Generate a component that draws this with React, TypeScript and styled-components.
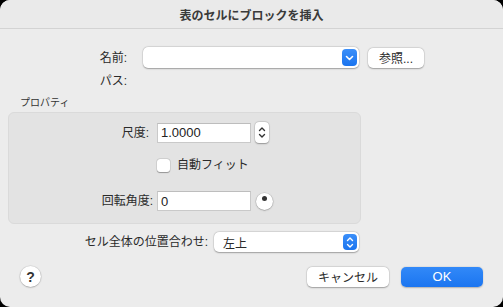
import styled, { createGlobalStyle } from "styled-components";

const GlobalStyle = createGlobalStyle`
  html, body {
    margin: 0;
    padding: 0;
    background: #000;
  }
  body {
    font-family: "Liberation Sans", "Noto Sans CJK JP", sans-serif;
    color: #262626;
  }
`;

function ChevronDown() {
  return (
    <svg width="9" height="6" viewBox="0 0 9 6">
      <path d="M1.5 1.5 L4.5 4.5 L7.5 1.5" fill="none" stroke="#fff" strokeWidth="1.6" strokeLinecap="round" strokeLinejoin="round" />
    </svg>
  );
}

function UpDown({ color }: { color: string }) {
  return (
    <svg width="8" height="13" viewBox="0 0 8 13">
      <path d="M1.5 4.5 L4 2 L6.5 4.5" fill="none" stroke={color} strokeWidth="1.4" strokeLinecap="round" strokeLinejoin="round" />
      <path d="M1.5 8.5 L4 11 L6.5 8.5" fill="none" stroke={color} strokeWidth="1.4" strokeLinecap="round" strokeLinejoin="round" />
    </svg>
  );
}

function App() {
  return (
    <>
      <GlobalStyle />
      <Window>
        <TitleBar>表のセルにブロックを挿入</TitleBar>
        <Body>
          <Row $top={18}>
            <Label $width={143} $pad={16}>名前:</Label>
            <Combo>
              <ComboArrow>
                <ChevronDown />
              </ComboArrow>
            </Combo>
            <PushButton $width={56} $left={9}>参照...</PushButton>
          </Row>
          <Row $top={5}>
            <Label $width={143} $pad={16}>パス:</Label>
          </Row>
          <Caption>プロパティ</Caption>
          <Group>
            <Row $top={0}>
              <Label $width={148} $pad={8}>尺度:</Label>
              <TextField value="1.0000" readOnly />
              <Stepper>
                <UpDown color="#333" />
              </Stepper>
            </Row>
            <CheckRow>
              <CheckBox />
              <CheckLabel>自動フィット</CheckLabel>
            </CheckRow>
            <Row $top={19}>
              <Label $width={148} $pad={4}>回転角度:</Label>
              <TextField value="0" readOnly />
              <Dial>
                <DialDot />
              </Dial>
            </Row>
          </Group>
          <Row $top={8}>
            <Label $width={214} $pad={6}>セル全体の位置合わせ:</Label>
            <Popup>
              <PopupText>左上</PopupText>
              <PopupArrow>
                <UpDown color="#fff" />
              </PopupArrow>
            </Popup>
          </Row>
          <Footer>
            <HelpButton>?</HelpButton>
            <FooterButtons>
              <PushButton $width={82} $left={0}>キャンセル</PushButton>
              <DefaultButton>OK</DefaultButton>
            </FooterButtons>
          </Footer>
        </Body>
      </Window>
    </>
  );
}

export default App;

const Window = styled.div`
  width: 503px;
  height: 307px;
  background: #ececec;
  border-radius: 10px;
  overflow: hidden;
  display: flex;
  flex-direction: column;
`;

const TitleBar = styled.div`
  height: 28px;
  flex-shrink: 0;
  border-bottom: 1px solid #d3d3d3;
  background: #eaeaea;
  display: flex;
  align-items: center;
  justify-content: center;
  font-size: 12px;
  font-weight: 700;
  color: #3a3a3a;
`;

const Body = styled.div`
  display: flex;
  flex-direction: column;
`;

const Row = styled.div<{ $top: number }>`
  display: flex;
  align-items: center;
  margin-top: ${(p) => p.$top}px;
  min-height: 16px;
`;

const Label = styled.div<{ $width: number; $pad: number }>`
  width: ${(p) => p.$width}px;
  padding-right: ${(p) => p.$pad}px;
  box-sizing: border-box;
  text-align: right;
  font-size: 12px;
  line-height: 16px;
  white-space: nowrap;
  color: #2a2a2a;
`;

const Combo = styled.div`
  width: 216px;
  height: 21px;
  box-sizing: border-box;
  background: #fff;
  border-radius: 5px;
  box-shadow: 0 0.5px 1.5px rgba(0, 0, 0, 0.3), 0 0 0 0.5px rgba(0, 0, 0, 0.08);
  display: flex;
  justify-content: flex-end;
  align-items: center;
  padding-right: 2px;
`;

const ComboArrow = styled.div`
  width: 15px;
  height: 17px;
  border-radius: 4px;
  background: linear-gradient(#3b8ff9, #1a74ef);
  display: flex;
  align-items: center;
  justify-content: center;
`;

const PushButton = styled.div<{ $width: number; $left: number }>`
  width: ${(p) => p.$width}px;
  height: 20px;
  margin-left: ${(p) => p.$left}px;
  background: #fff;
  border-radius: 5px;
  box-shadow: 0 0.5px 1.5px rgba(0, 0, 0, 0.3), 0 0 0 0.5px rgba(0, 0, 0, 0.08);
  display: flex;
  align-items: center;
  justify-content: center;
  font-size: 12px;
  color: #2a2a2a;
`;

const Caption = styled.div`
  margin: 7px 0 0 20px;
  font-size: 10px;
  line-height: 14px;
  color: #333;
`;

const Group = styled.div`
  margin: 2px 0 0 8px;
  width: 353px;
  height: 112px;
  box-sizing: border-box;
  background: #e3e3e3;
  border: 1px solid #dadada;
  border-radius: 6px;
  padding-top: 9px;
  display: flex;
  flex-direction: column;
`;

const TextField = styled.input`
  width: 94px;
  height: 20px;
  box-sizing: border-box;
  margin: 0;
  border: 1px solid #c9c9c9;
  border-top-color: #bdbdbd;
  background: #fff;
  padding: 0 3px;
  font-family: "Liberation Sans", sans-serif;
  font-size: 13px;
  color: #222;
  outline: none;
`;

const Stepper = styled.div`
  width: 14px;
  height: 21px;
  margin-left: 4px;
  background: #fff;
  border-radius: 4px;
  box-shadow: 0 0.5px 1.5px rgba(0, 0, 0, 0.3), 0 0 0 0.5px rgba(0, 0, 0, 0.1);
  display: flex;
  align-items: center;
  justify-content: center;
`;

const CheckRow = styled.div`
  display: flex;
  align-items: center;
  height: 14px;
  margin: 15px 0 0 148px;
`;

const CheckBox = styled.div`
  width: 13px;
  height: 13px;
  background: #fff;
  border-radius: 3px;
  box-shadow: 0 0.5px 1px rgba(0, 0, 0, 0.3), 0 0 0 0.5px rgba(0, 0, 0, 0.12);
`;

const CheckLabel = styled.div`
  margin-left: 7px;
  font-size: 12px;
  line-height: 14px;
  color: #2a2a2a;
`;

const Dial = styled.div`
  width: 17px;
  height: 17px;
  margin-left: 5px;
  border-radius: 50%;
  background: #fff;
  box-shadow: 0 0.5px 1.5px rgba(0, 0, 0, 0.35), 0 0 0 0.5px rgba(0, 0, 0, 0.12);
  display: flex;
  justify-content: center;
  padding-top: 3px;
  box-sizing: border-box;
`;

const DialDot = styled.div`
  width: 5px;
  height: 5px;
  border-radius: 50%;
  background: #333;
`;

const Popup = styled.div`
  width: 145px;
  height: 20px;
  box-sizing: border-box;
  background: #fff;
  border-radius: 5px;
  box-shadow: 0 0.5px 1.5px rgba(0, 0, 0, 0.3), 0 0 0 0.5px rgba(0, 0, 0, 0.08);
  display: flex;
  align-items: center;
  justify-content: space-between;
  padding: 0 2px 0 9px;
`;

const PopupText = styled.div`
  font-size: 12px;
  color: #2a2a2a;
`;

const PopupArrow = styled.div`
  width: 14px;
  height: 16px;
  border-radius: 4px;
  background: linear-gradient(#3b8ff9, #1a74ef);
  display: flex;
  align-items: center;
  justify-content: center;
`;

const Footer = styled.div`
  display: flex;
  align-items: center;
  justify-content: space-between;
  margin-top: 14px;
  padding: 0 20px 0 20px;
`;

const HelpButton = styled.div`
  width: 21px;
  height: 21px;
  border-radius: 50%;
  background: #fff;
  box-shadow: 0 0.5px 1.5px rgba(0, 0, 0, 0.3), 0 0 0 0.5px rgba(0, 0, 0, 0.08);
  display: flex;
  align-items: center;
  justify-content: center;
  font-size: 14px;
  font-weight: 700;
  color: #333;
`;

const FooterButtons = styled.div`
  display: flex;
  gap: 12px;
`;

const DefaultButton = styled.div`
  width: 82px;
  height: 20px;
  border-radius: 5px;
  background: linear-gradient(#3289f8, #1b75f0);
  box-shadow: 0 0.5px 1.5px rgba(0, 0, 0, 0.25);
  display: flex;
  align-items: center;
  justify-content: center;
  font-size: 13px;
  color: #fff;
`;
